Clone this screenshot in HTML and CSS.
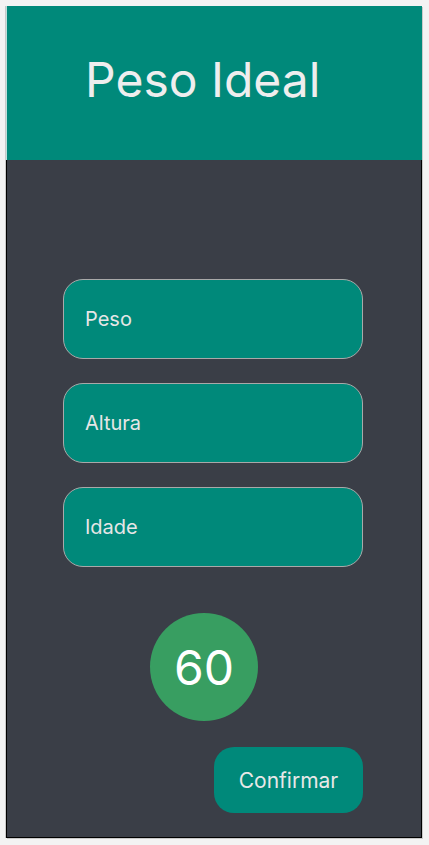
FILE: index.html
```html
<!DOCTYPE html>
<html lang="pt">
<head>
<meta charset="utf-8">
<title>Peso Ideal</title>
<link rel="stylesheet" href="styles.css">
</head>
<body>
<div class="app">
  <header class="header">
    <h1 class="title">Peso Ideal</h1>
  </header>
  <main class="content">
    <div class="fields">
      <input class="field" type="text" placeholder="Peso">
      <input class="field" type="text" placeholder="Altura">
      <input class="field" type="text" placeholder="Idade">
    </div>
    <div class="result">60</div>
    <div class="actions">
      <button class="confirm" type="button">Confirmar</button>
    </div>
  </main>
</div>
</body>
</html>
```
FILE: styles.css
```css
* { box-sizing: border-box; }
html, body { margin: 0; padding: 0; }
body {
  background: #f3f3f3;
  padding: 6px 7px 7px 6px;
  font-family: Inter, "Noto Sans", sans-serif;
}
.app {
  width: 416px;
  height: 832px;
  display: flex;
  flex-direction: column;
  box-shadow: -1px 0 0 #c9c9c9, 1px 1px 0 #c9c9c9;
}
.header {
  height: 154px;
  background: #00897a;
  display: flex;
  align-items: center;
  padding-left: 78px;
  padding-bottom: 8px;
  border-left: 1px solid #bfe0db;
}
.title {
  margin: 0;
  font-weight: 400;
  font-size: 48px;
  color: #eeeeee;
}
.content {
  flex: 1;
  background: #3a3e47;
  border: 1px solid #000;
  border-top: none;
  display: flex;
  flex-direction: column;
  padding: 119px 58px 23px 56px;
}
.fields {
  display: flex;
  flex-direction: column;
  gap: 24px;
}
.field {
  width: 300px;
  height: 80px;
  border-radius: 20px;
  border: 1px solid #a9a9a9;
  background: #00897a;
  padding: 0 0 0 21px;
  font-family: inherit;
  font-size: 20px;
  color: #eeeeee;
  outline: none;
}
.field::placeholder { color: #e6e6e6; }
.result {
  margin: 46px 0 0 87px;
  width: 108px;
  height: 108px;
  border-radius: 50%;
  background: #389e61;
  color: #ffffff;
  font-size: 48px;
  display: flex;
  align-items: center;
  justify-content: center;
}
.actions {
  margin-top: 26px;
  display: flex;
  justify-content: flex-end;
}
.confirm {
  width: 149px;
  height: 66px;
  border: none;
  border-radius: 20px;
  background: #00897a;
  color: #e8e8e8;
  font-family: inherit;
  font-size: 21px;
  cursor: pointer;
}
```
